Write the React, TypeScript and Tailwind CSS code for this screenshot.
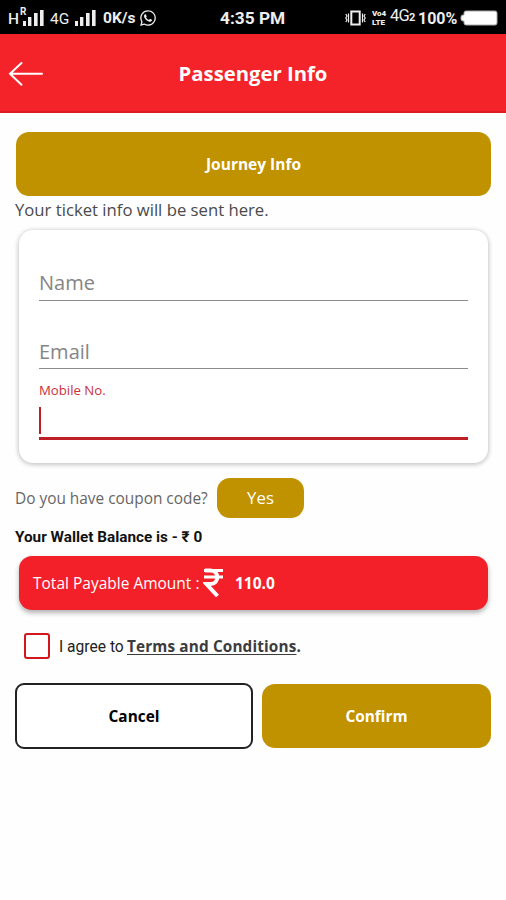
import type { ReactNode } from 'react';
import { FaWhatsapp } from 'react-icons/fa';

function SignalBars() {
  return (
    <svg width="21" height="18" viewBox="0 0 21 18" fill="currentColor">
      <rect x="0" y="12" width="3" height="5" />
      <rect x="5" y="8" width="3.4" height="9" />
      <rect x="11" y="4" width="3.6" height="13" />
      <rect x="17" y="1" width="3.6" height="16" />
    </svg>
  );
}

function VibrateIcon() {
  return (
    <svg width="21" height="18" viewBox="0 0 21 18" fill="none" stroke="currentColor">
      <rect x="6.3" y="2.5" width="8.4" height="13" strokeWidth="2" />
      <path d="M3.5 4.5v9M17.5 4.5v9" strokeWidth="1.2" />
      <path d="M0.8 5l1.2 2-1.2 2 1.2 2-1.2 2M20.2 5L19 7l1.2 2-1.2 2 1.2 2" strokeWidth="1.2" />
    </svg>
  );
}

function StatusBar() {
  return (
    <div className="h-[34px] shrink-0 bg-black text-[#eeeeee] font-[Roboto,sans-serif] grid grid-cols-[1fr_66px_1fr] items-center pl-[8px] pr-[8px] pt-[2px] whitespace-nowrap">
      <div className="flex items-center">
        <div className="relative flex items-center">
          <span className="w-[15px] text-[15.5px] leading-none font-medium pt-[3px]">H</span>
          <SignalBars />
          <span className="absolute left-[12px] -top-[2px] text-[10px] leading-none font-bold">R</span>
        </div>
        <span className="ml-[6px] w-[25px] text-[15.5px] leading-none pt-[4px]">4G</span>
        <SignalBars />
        <span className="ml-[7px] w-[36px] text-[15.5px] leading-none font-bold pt-[2px]">0K/s</span>
        <FaWhatsapp size={18} />
      </div>
      <span className="text-[17.3px] leading-none font-bold pt-[2px]">4:35 PM</span>
      <div className="flex items-center justify-end">
        <VibrateIcon />
        <span className="ml-[6px] w-[18px] flex flex-col text-[8px] font-black">
          <span className="h-[8px] leading-[8px]">Vo4</span>
          <span className="h-[9px] leading-[10px]">LTE</span>
        </span>
        <span className="w-[28px] text-[16.5px] leading-none tracking-[-0.8px] -mt-[3px]">
          4G<span className="text-[11px] font-bold">2</span>
        </span>
        <span className="w-[42px] text-[16px] leading-none font-bold pt-[2px]">100%</span>
        <svg width="38" height="18" viewBox="0 0 38 18">
          <path d="M6 2h29a2 2 0 0 1 2 2v10a2 2 0 0 1-2 2H6a2 2 0 0 1-2-2v-2H3a2 2 0 0 1-2-2V8a2 2 0 0 1 2-2h1V4a2 2 0 0 1 2-2z" fill="#fff" stroke="#aaa" strokeWidth="1" />
        </svg>
      </div>
    </div>
  );
}

function Header() {
  return (
    <header className="relative h-[79px] shrink-0 bg-[#f42229] border-b-2 border-[#dc1b22] flex items-center justify-center">
      <button className="absolute left-[8px] top-[27px] text-white" title="Back">
        <svg width="36" height="26" viewBox="0 0 36 26" fill="none" stroke="currentColor" strokeWidth="2" strokeLinecap="round">
          <path d="M2 12.8h32M13.5 2L2 12.8l11.5 11" />
        </svg>
      </button>
      <h1 className="text-white text-[20.3px] font-bold leading-none pt-[2px]">Passenger Info</h1>
    </header>
  );
}

function Field({ label, className }: { label: string; className: string }) {
  return (
    <div className={`border-b-[1.5px] border-[#8c8c8c] text-[#858585] text-[20px] leading-[24px] ${className}`}>
      {label}
    </div>
  );
}

function GoldButton({ children, className }: { children: ReactNode; className: string }) {
  return (
    <button className={`bg-[#c19200] text-white flex items-center justify-center ${className}`}>
      {children}
    </button>
  );
}

export default function App() {
  return (
    <div className="w-[506px] h-[900px] overflow-hidden bg-[#fefefe] flex flex-col font-['Open_Sans',sans-serif]">
      <StatusBar />
      <Header />

      <main className="pl-[15px] pr-[15px] pt-[19px] flex flex-col">
        <GoldButton className="ml-px h-[64px] rounded-[13px] pt-[2px] text-[15.5px] font-bold">Journey Info</GoldButton>
        <p className="h-[34px] pt-[2px] text-[16.7px] leading-[24px] text-[#4a4a4a] whitespace-nowrap">
          Your ticket info will be sent here.
        </p>

        {/* Contact details */}
        <section className="ml-[4px] mr-[3px] h-[233px] rounded-[14px] bg-white shadow-[0_1px_4px_1px_rgba(0,0,0,0.22)] px-[20px] flex flex-col">
          <Field label="Name" className="mt-[41px] h-[30px]" />
          <Field label="Email" className="mt-[39px] h-[29px]" />
          <label className="mt-[12px] h-[18px] text-[13.2px] leading-[18px] text-[#c9303a]">Mobile No.</label>
          <div className="mt-[8px] h-[33px] border-b-[3px] border-[#bd2024]">
            <div className="w-[2px] h-[27px] bg-[#bd2024]" />
          </div>
        </section>

        <div className="mt-[15px] flex items-center h-[40px]">
          <span className="w-[202px] pt-[2px] text-[15.4px] text-[#666666] whitespace-nowrap">Do you have coupon code?</span>
          <GoldButton className="w-[87px] h-[40px] rounded-[13px] text-[16.8px]">Yes</GoldButton>
        </div>

        <p className="mt-[9px] h-[20px] text-[15.3px] leading-[20px] font-bold text-[#111111] font-[Roboto,'Noto_Sans',sans-serif]">
          Your Wallet Balance is - ₹ 0
        </p>

        <div className="mt-[9px] ml-[4px] mr-[3px] h-[54px] rounded-[13px] bg-[#f42029] shadow-[0_3px_5px_rgba(0,0,0,0.3)] pl-[14px] flex items-center text-white whitespace-nowrap">
          <span className="w-[170px] pt-px text-[15.5px]">Total Payable Amount :</span>
          <svg width="20" height="30" viewBox="0 0 20 30" fill="none" stroke="currentColor">
            <path d="M1 2.5h19M1 9h19" strokeWidth="3.2" />
            <path d="M2 2.5h5.5c9 0 9 13.5 0 13.5H3.5L14.5 28" strokeWidth="4" />
          </svg>
          <span className="ml-[12px] pt-px text-[15.5px] font-bold">110.0</span>
        </div>

        <div className="mt-[22px] ml-[9px] h-[28px] flex items-center whitespace-nowrap">
          <span className="w-[26px] h-[26px] border-[2.5px] border-[#d3161c] rounded-[3px]" />
          <span className="ml-[9px] pt-[4px] w-[68px] text-[15.6px] text-[#222222] font-[Roboto,sans-serif]">I agree to</span>
          <span className="pt-px text-[15.3px] font-bold tracking-[0.15px] text-[#3c3c3c]">
            <span className="underline decoration-1 underline-offset-2">Terms and Conditions</span>.
          </span>
        </div>

        <div className="mt-[23px] flex items-center gap-[9px] text-[15.4px] font-bold">
          <button className="w-[238px] h-[66px] pt-[2px] rounded-[9px] border-2 border-[#222222] bg-white text-black">
            Cancel
          </button>
          <GoldButton className="flex-1 h-[64px] pt-[2px] rounded-[13px]">Confirm</GoldButton>
        </div>
      </main>
    </div>
  );
}
